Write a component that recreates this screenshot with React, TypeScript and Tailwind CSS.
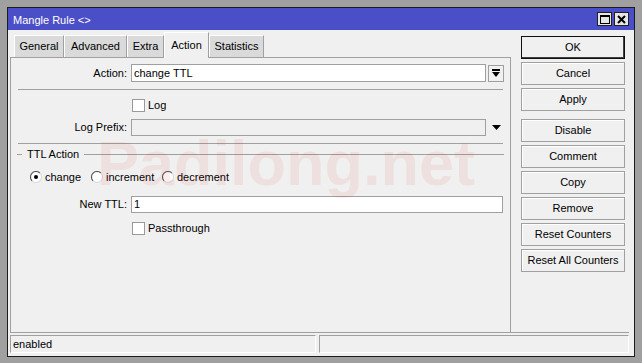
import React from "react";

// Winbox style "Mangle Rule" dialog

function Tab({ label, width, active }: { label: string; width: string; active?: boolean }) {
  if (active) {
    return (
      <div
        className={`${width} relative z-10 -mb-px flex h-[26px] items-center justify-center border-l border-t border-r border-l-white border-t-white border-r-[#a0a0a0] bg-[#f0f0f0] pb-[1px]`}
      >
        {label}
      </div>
    );
  }
  return (
    <div
      className={`${width} mt-[3px] flex h-[22px] items-center justify-center border-l border-t border-r border-l-white border-t-white border-r-[#a0a0a0] bg-[#dadada]`}
    >
      {label}
    </div>
  );
}

function Btn({ label, primary, className = "" }: { label: string; primary?: boolean; className?: string }) {
  return (
    <div
      className={`flex h-[23px] w-[104px] items-center justify-center bg-[#f0f0f0] ${
        primary
          ? "border border-[#101010] shadow-[inset_-1px_-1px_0_#404040]"
          : "border border-[#a0a0a0] shadow-[inset_1px_1px_0_#ffffff]"
      } ${className}`}
    >
      {label}
    </div>
  );
}

function Check({ label }: { label: string }) {
  return (
    <div className="flex items-center">
      <div className="h-[13px] w-[13px] border border-[#9a9a9a] bg-white" />
      <span className="ml-[3px]">{label}</span>
    </div>
  );
}

function Radio({ label, checked, className = "" }: { label: string; checked?: boolean; className?: string }) {
  return (
    <div className={`flex items-center ${className}`}>
      <svg width="12" height="12" viewBox="0 0 12 12">
        <circle cx="6" cy="6" r="5.5" fill="#ffffff" />
        <path d="M2.1 9.9 A5.5 5.5 0 0 1 9.9 2.1" fill="none" stroke="#555555" strokeWidth="1.1" />
        <path d="M9.9 2.1 A5.5 5.5 0 0 1 2.1 9.9" fill="none" stroke="#dcdcdc" strokeWidth="1.1" />
        {checked && <circle cx="6" cy="6" r="2" fill="#000000" />}
      </svg>
      <span className="ml-[3px]">{label}</span>
    </div>
  );
}

export default function App() {
  const buttons = ["Cancel", "Apply"];
  const buttons2 = ["Comment", "Copy", "Remove", "Reset Counters", "Reset All Counters"];

  return (
    <div className="relative h-[363px] w-[642px] overflow-hidden bg-[#a0a0a0] pl-[7px] pt-[7px] font-['Liberation_Sans',Arial,sans-serif] text-[11px] leading-none text-black">
      <div className="flex h-[350px] w-[628px] flex-col border border-[#1c1c1c]">
        {/* title bar */}
        <div className="flex h-[22px] items-center justify-between bg-[#4b4fc7] pl-[5px] pr-[5px]">
          <span className="mt-[2px] text-[11px] text-white">Mangle Rule &lt;&gt;</span>
          <div className="flex gap-[2px]">
            <div className="flex h-[14px] w-[15px] items-center justify-center border border-[#202020] bg-[#e6e6e6]">
              <div className="h-[9px] w-[10px] border border-t-2 border-black" />
            </div>
            <div className="flex h-[14px] w-[15px] items-center justify-center border border-[#202020] bg-[#e6e6e6]">
              <svg width="9" height="9" viewBox="0 0 9 9">
                <path d="M1 1 L8 8 M8 1 L1 8" stroke="#000" strokeWidth="2" />
              </svg>
            </div>
          </div>
        </div>

        {/* body */}
        <div className="flex flex-1 flex-col bg-[#f0f0f0]">
          <div className="flex h-[302px] pl-[2px]">
            {/* tabbed panel */}
            <div className="flex w-[501px] flex-col pt-[2px]">
              <div className="flex h-[25px] pl-[4px]">
                <Tab label="General" width="w-[50px]" />
                <Tab label="Advanced" width="w-[63px]" />
                <Tab label="Extra" width="w-[37px]" />
                <Tab label="Action" width="w-[45px]" active />
                <Tab label="Statistics" width="w-[55px]" />
              </div>
              <div className="flex flex-1 flex-col border-l border-r border-t border-[#a0a0a0]">
                {/* Action */}
                <div className="mt-[6px] flex h-[18px] items-center">
                  <span className="w-[116px] text-right">Action:</span>
                  <div className="ml-[4px] flex h-[18px] w-[355px] items-center border border-[#a0a0a0] bg-white pl-[2px]">
                    change TTL
                  </div>
                  <div className="ml-[2px] flex h-[17px] w-[16px] items-center justify-center border border-[#a0a0a0] bg-[#f0f0f0]">
                    <svg width="8" height="9" viewBox="0 0 8 9">
                      <rect x="0" y="0" width="8" height="2" fill="#000" />
                      <path d="M0 3 L8 3 L4 8 Z" fill="#000" />
                    </svg>
                  </div>
                </div>
                <div className="ml-[7px] mt-[7px] h-px w-[485px] bg-[#a0a0a0]" />

                {/* Log */}
                <div className="ml-[121px] mt-[9px] flex h-[13px] items-center">
                  <Check label="Log" />
                </div>

                {/* Log Prefix */}
                <div className="mt-[7px] flex h-[17px] items-center">
                  <span className="w-[116px] text-right">Log Prefix:</span>
                  <div className="ml-[4px] h-[17px] w-[355px] border border-[#a0a0a0] bg-[#f0f0f0]" />
                  <svg className="ml-[6px]" width="9" height="6" viewBox="0 0 9 6">
                    <path d="M0 0 L9 0 L4.5 5 Z" fill="#000" />
                  </svg>
                </div>
                <div className="ml-[7px] mt-[7px] h-px w-[485px] bg-[#a0a0a0]" />

                {/* TTL Action group */}
                <div className="mt-[4px] flex h-[13px] items-center">
                  <div className="ml-[6px] h-px w-[5px] bg-[#a0a0a0]" />
                  <span className="ml-[5px]">TTL Action</span>
                  <div className="ml-[5px] h-px w-[420px] bg-[#a0a0a0]" />
                </div>

                <div className="ml-[19px] mt-[9px] flex h-[14px] items-center">
                  <Radio label="change" checked className="w-[61px]" />
                  <Radio label="increment" className="w-[71px]" />
                  <Radio label="decrement" />
                </div>

                {/* New TTL */}
                <div className="mt-[12px] flex h-[17px] items-center">
                  <span className="w-[116px] text-right">New TTL:</span>
                  <div className="ml-[4px] flex h-[17px] w-[372px] items-center border border-[#a0a0a0] bg-white pl-[2px]">
                    1
                  </div>
                </div>

                <div className="ml-[121px] mt-[9px] flex h-[13px] items-center">
                  <Check label="Passthrough" />
                </div>
              </div>
            </div>

            {/* buttons */}
            <div className="ml-[10px] flex flex-col pt-[6px]">
              <Btn label="OK" primary />
              {buttons.map((b) => (
                <Btn key={b} label={b} className="mt-[3px]" />
              ))}
              <Btn label="Disable" className="mt-[8px]" />
              {buttons2.map((b) => (
                <Btn key={b} label={b} className="mt-[3px]" />
              ))}
            </div>
          </div>

          {/* status bar */}
          <div className="ml-[2px] mr-[5px] flex flex-col border-t border-[#a0a0a0]">
            <div className="mt-[2px] flex h-[18px] gap-[3px]">
              <div className="flex w-[306px] items-center border-l border-t border-b border-r border-l-[#a0a0a0] border-t-[#a0a0a0] border-b-white border-r-white pl-[2px]">
                enabled
              </div>
              <div className="flex-1 border-l border-t border-b border-r border-l-[#a0a0a0] border-t-[#a0a0a0] border-b-white border-r-white" />
            </div>
          </div>
        </div>
      </div>

      {/* watermark */}
      <div className="pointer-events-none absolute left-[97px] top-[132px] text-[63px] font-bold leading-none text-[rgba(225,40,40,0.08)]">
        Padilong.net
      </div>
    </div>
  );
}
